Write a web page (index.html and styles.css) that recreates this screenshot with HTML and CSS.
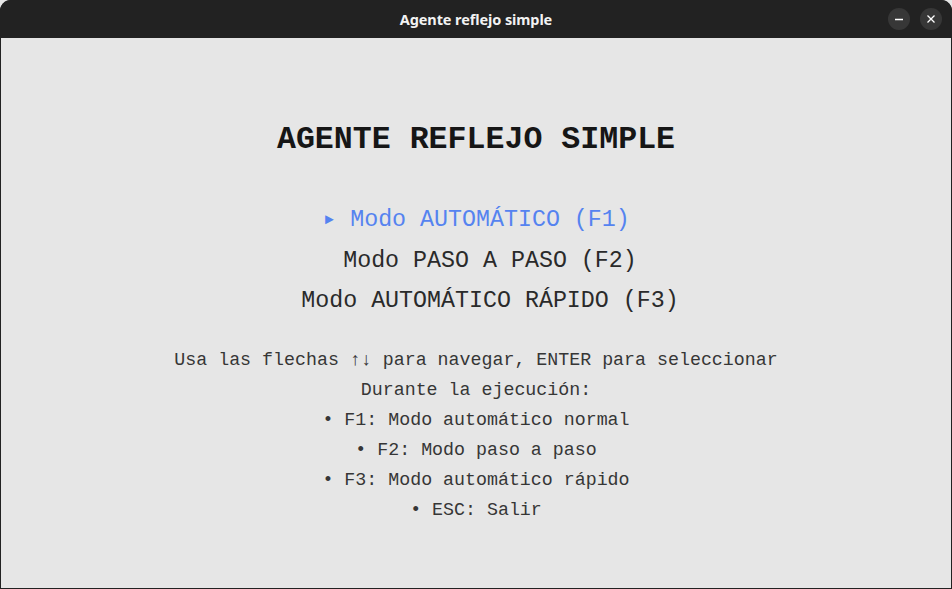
FILE: index.html
```html
<!DOCTYPE html>
<html lang="es">
<head>
<meta charset="utf-8">
<title>Agente reflejo simple</title>
<link rel="stylesheet" href="styles.css">
</head>
<body>
<div class="window">
  <header class="titlebar">
    <span class="title">Agente reflejo simple</span>
    <div class="controls">
      <button class="ctl" aria-label="Minimizar">
        <svg width="10" height="10" viewBox="0 0 10 10"><path d="M1 5.5h8" stroke="#fff" stroke-width="1.3"/></svg>
      </button>
      <button class="ctl" aria-label="Cerrar">
        <svg width="10" height="10" viewBox="0 0 10 10"><path d="M1.5 1.5l7 7M8.5 1.5l-7 7" stroke="#fff" stroke-width="1.3"/></svg>
      </button>
    </div>
  </header>
  <main class="content">
    <h1 class="heading">AGENTE REFLEJO SIMPLE</h1>
    <ul class="menu">
      <li class="item selected"><span class="arrow">►</span> Modo AUTOMÁTICO (F1)</li>
      <li class="item">  Modo PASO A PASO (F2)</li>
      <li class="item">  Modo AUTOMÁTICO RÁPIDO (F3)</li>
    </ul>
    <div class="help">
      <p>Usa las flechas ↑↓ para navegar, ENTER para seleccionar</p>
      <p>Durante la ejecución:</p>
      <p>• F1: Modo automático normal</p>
      <p>• F2: Modo paso a paso</p>
      <p>• F3: Modo automático rápido</p>
      <p>• ESC: Salir</p>
    </div>
  </main>
</div>
</body>
</html>
```

FILE: styles.css
```css
html, body {
  margin: 0;
  padding: 0;
  background: #e6e6e6;
}
body {
  width: 952px;
  height: 589px;
  overflow: hidden;
}
.window {
  width: 952px;
  height: 589px;
  display: flex;
  flex-direction: column;
  border-radius: 11px 11px 0 0;
  overflow: hidden;
  background: #222222;
  box-sizing: border-box;
}
.titlebar {
  height: 38px;
  flex: none;
  background: #222222;
  display: flex;
  align-items: center;
  justify-content: center;
  position: relative;
}
.title {
  color: #f2f2f2;
  font-family: "Noto Sans", "DejaVu Sans", sans-serif;
  font-weight: 700;
  font-size: 14.5px;
  letter-spacing: -0.1px;
  margin-top: -1px;
}
.controls {
  position: absolute;
  right: 10px;
  top: 8px;
  display: flex;
  gap: 10px;
}
.ctl {
  width: 22px;
  height: 22px;
  border-radius: 50%;
  border: none;
  padding: 0;
  background: #373737;
  display: flex;
  align-items: center;
  justify-content: center;
}
.content {
  flex: 1;
  background: #e6e6e6;
  margin: 0 1px 1px 1px;
  display: flex;
  flex-direction: column;
  align-items: center;
  font-family: "Liberation Mono", "DejaVu Sans Mono", monospace;
  color: #1e1e1e;
}
.heading {
  margin: 84px 0 0 0;
  font-size: 31.6px;
  line-height: 36px;
  font-weight: 700;
  color: #161616;
}
.menu {
  list-style: none;
  margin: 42px 0 0 0;
  padding: 0;
  display: flex;
  flex-direction: column;
  align-items: center;
}
.item {
  white-space: pre;
  font-size: 23.3px;
  line-height: 40px;
  color: #2a2a2a;
}
.item.selected {
  color: #5583f0;
}
.arrow {
  font-size: 15px;
  vertical-align: 2px;
  display: inline-block;
  width: 14px;
  text-align: center;
}
.help {
  margin-top: 24px;
  display: flex;
  flex-direction: column;
  align-items: center;
}
.help p {
  margin: 0;
  font-size: 18.3px;
  line-height: 30px;
  color: #363636;
  white-space: pre;
}
```
